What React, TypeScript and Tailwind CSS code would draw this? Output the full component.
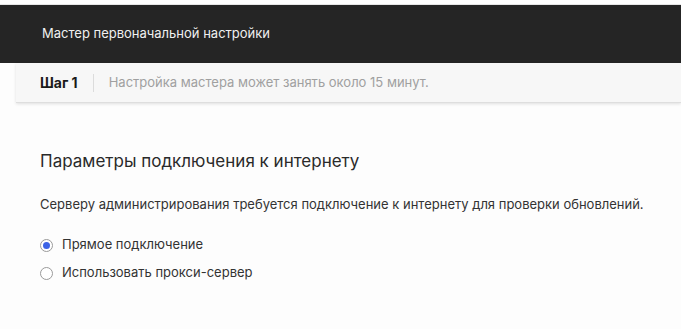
import React from 'react';

const App: React.FC = () => {
  return (
    <div className="w-[681px] h-[329px] overflow-hidden bg-[#fdfdfd] font-['Inter',sans-serif]">
      <div className="h-[5px] border-b border-[#e6e6e6] bg-white"></div>
      <div className="h-[58px] bg-[#252525] flex items-center pl-[42px]">
        <span className="text-[13px] text-[#f0f0f0]">Мастер первоначальной настройки</span>
      </div>
      <div className="ml-4 h-[40px] bg-[#f7f7f7] border-b border-[#dedede] shadow-[0_1px_3px_rgba(0,0,0,0.12)] flex items-center pl-6">
        <span className="text-[14px] font-bold text-[#1a1a1a]">Шаг 1</span>
        <span className="mx-[15px] h-[18px] w-px bg-[#dcdcdc]"></span>
        <span className="text-[13px] text-[#a0a0a0]">Настройка мастера может занять около 15 минут.</span>
      </div>
      <div className="pl-10 pt-[46px]">
        <h2 className="text-[17px] text-[#2a2a2a] leading-[24px]">Параметры подключения к интернету</h2>
        <p className="mt-[21px] text-[13px] text-[#333] leading-[20px] whitespace-nowrap">
          Серверу администрирования требуется подключение к интернету для проверки обновлений.
        </p>
        <div className="mt-[21px] flex flex-col gap-[8px]">
          <label className="flex items-center h-[20px]">
            <span className="w-[13px] h-[13px] rounded-full border border-[#9a9a9a] bg-white flex items-center justify-center">
              <span className="w-[7px] h-[7px] rounded-full bg-[#3d63e6]"></span>
            </span>
            <span className="ml-[9px] text-[13px] text-[#333]">Прямое подключение</span>
          </label>
          <label className="flex items-center h-[20px]">
            <span className="w-[13px] h-[13px] rounded-full border border-[#9a9a9a] bg-white"></span>
            <span className="ml-[9px] text-[13px] text-[#333]">Использовать прокси-сервер</span>
          </label>
        </div>
      </div>
    </div>
  );
};

export default App;
